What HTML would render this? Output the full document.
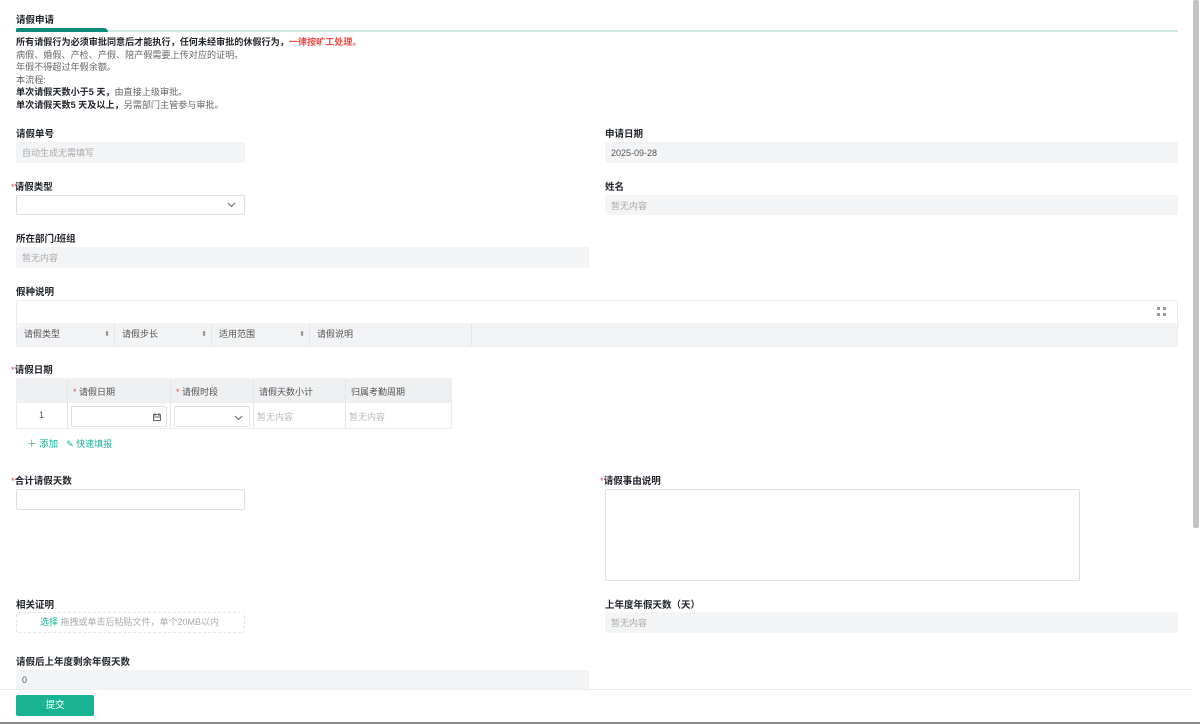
<!DOCTYPE html>
<html><head><meta charset="utf-8"><style>
*{margin:0;padding:0;box-sizing:border-box}
body{width:1200px;height:724px;overflow:hidden;background:#fff;font-family:"Liberation Sans","Noto Sans CJK SC",sans-serif;font-size:9.5px;color:#333;position:relative}
.a{position:absolute;white-space:nowrap}
.lb{font-weight:bold;color:#1f2329;font-size:9.5px}
.req:before{content:"*";color:#f54a45;font-weight:normal}
.in{position:absolute;background:#f3f4f6;border-radius:2px;color:#aaa;padding-left:6px;display:flex;align-items:center;font-size:9px}
.bx{position:absolute;border:1px solid #dee0e3;border-radius:2px;background:#fff}
.t{font-size:9.1px;line-height:12.6px}
</style></head><body>
<div class="a lb" style="left:16px;top:12px">请假申请</div>
<div class="a" style="left:16px;top:30px;width:1162px;height:2px;background:#cfe8e3"></div>
<div class="a" style="left:16px;top:28px;width:92px;height:4px;background:#0e8a7a;border-radius:2px 4px 0 0"></div>
<div class="a t" style="left:16px;top:36px">
<div><b style="color:#1f2329">所有请假行为必须审批同意后才能执行，任何未经审批的休假行为，</b><b style="color:#f54a45">一律按旷工处理。</b></div>
<div style="color:#666">病假、婚假、产检、产假、陪产假需要上传对应的证明。</div>
<div style="color:#666">年假不得超过年假余额。</div>
<div style="color:#666">本流程:</div>
<div style="color:#666"><b style="color:#1f2329">单次请假天数小于5 天</b><b style="color:#1f2329">，</b>由直接上级审批。</div>
<div style="color:#666"><b style="color:#1f2329">单次请假天数5 天及以上</b><b style="color:#1f2329">，</b>另需部门主管参与审批。</div>
</div>

<div class="a lb" style="left:16px;top:126px">请假单号</div>
<div class="in" style="left:16px;top:142px;width:229px;height:21px">自动生成无需填写</div>
<div class="a lb" style="left:605px;top:126px">申请日期</div>
<div class="in" style="left:605px;top:142px;width:573px;height:21px;color:#555">2025-09-28</div>

<div class="a lb req" style="left:11px;top:179px">请假类型</div>
<div class="bx" style="left:16px;top:195px;width:229px;height:20px"><svg style="position:absolute;right:8px;top:6px" width="9" height="6"><path d="M1 1l3.5 3.5L8 1" stroke="#666" fill="none"/></svg></div>
<div class="a lb" style="left:605px;top:179px">姓名</div>
<div class="in" style="left:605px;top:195px;width:573px;height:20px">暂无内容</div>

<div class="a lb" style="left:16px;top:231px">所在部门/班组</div>
<div class="in" style="left:16px;top:247px;width:573px;height:21px">暂无内容</div>

<div class="a lb" style="left:16px;top:284px">假种说明</div>
<div class="bx" style="left:16px;top:300px;width:1162px;height:47px;border-color:#ebedf0">
<svg style="position:absolute;right:11px;top:6px" width="9" height="9" fill="#999"><rect x="0" y="0" width="3" height="3"/><rect x="6" y="0" width="3" height="3"/><rect x="0" y="6" width="3" height="3"/><rect x="6" y="6" width="3" height="3"/></svg>
<div style="position:absolute;left:0;top:22px;right:0;height:23px;background:#f2f3f5;display:flex;color:#555;font-size:9px;align-items:center">
<div style="width:98px;border-right:1px solid #e5e6e8;height:23px;line-height:23px;padding-left:7px;position:relative">请假类型<span style="position:absolute;right:4px;font-size:7px;color:#888">⬍</span></div>
<div style="width:97px;border-right:1px solid #e5e6e8;height:23px;line-height:23px;padding-left:7px;position:relative">请假步长<span style="position:absolute;right:4px;font-size:7px;color:#888">⬍</span></div>
<div style="width:98px;border-right:1px solid #e5e6e8;height:23px;line-height:23px;padding-left:7px;position:relative">适用范围<span style="position:absolute;right:4px;font-size:7px;color:#888">⬍</span></div>
<div style="width:162px;border-right:1px solid #e5e6e8;height:23px;line-height:23px;padding-left:7px">请假说明</div>
</div></div>

<div class="a lb req" style="left:11px;top:362px">请假日期</div>
<div class="bx" style="left:16px;top:378px;width:436px;height:51px;border-color:#ebedf0;overflow:hidden;font-size:9px;color:#555">
<div style="position:absolute;left:0;top:0;width:436px;height:24px;background:#eff0f2"></div>
<div style="position:absolute;left:50px;top:0;width:1px;height:51px;background:#e5e6e8"></div>
<div style="position:absolute;left:153px;top:0;width:1px;height:51px;background:#e5e6e8"></div>
<div style="position:absolute;left:236px;top:0;width:1px;height:51px;background:#e5e6e8"></div>
<div style="position:absolute;left:328px;top:0;width:1px;height:51px;background:#e5e6e8"></div>
<div class="a" style="left:56px;top:6px"><span style="color:#f54a45">*</span> 请假日期</div>
<div class="a" style="left:159px;top:6px"><span style="color:#f54a45">*</span> 请假时段</div>
<div class="a" style="left:242px;top:6px">请假天数小计</div>
<div class="a" style="left:334px;top:6px">归属考勤周期</div>
<div class="a" style="left:22px;top:31px">1</div>
<div class="bx" style="left:54px;top:27px;width:96px;height:21px"><svg style="position:absolute;right:5px;top:6px" width="8" height="8"><rect x=".5" y="1.5" width="7" height="6" stroke="#666" fill="none"/><path d="M2 0v3M6 0v3M.5 4h7" stroke="#666"/></svg></div>
<div class="bx" style="left:157px;top:27px;width:76px;height:21px"><svg style="position:absolute;right:6px;top:8px" width="9" height="6"><path d="M1 1l3.5 3.5L8 1" stroke="#666" fill="none"/></svg></div>
<div class="a" style="left:240px;top:31px;color:#bbb">暂无内容</div>
<div class="a" style="left:332px;top:31px;color:#bbb">暂无内容</div>
</div>
<div class="a" style="left:27px;top:436px;color:#19b393;font-size:9.5px">＋ 添加 &nbsp;&nbsp;<span style="font-size:9px">✎ 快速填报</span></div>

<div class="a lb req" style="left:11px;top:473px">合计请假天数</div>
<div class="bx" style="left:16px;top:489px;width:229px;height:21px"></div>
<div class="a lb req" style="left:600px;top:473px">请假事由说明</div>
<div class="bx" style="left:605px;top:489px;width:475px;height:92px"></div>

<div class="a lb" style="left:16px;top:597px">相关证明</div>
<div class="bx" style="left:16px;top:612px;width:229px;height:21px;border-style:dashed;border-color:#e5e6e8;font-size:9px;color:#aaa;line-height:19px;padding-left:23px"><span style="color:#19b393">选择</span> 拖拽或单击后粘贴文件，单个20MB以内</div>
<div class="a lb" style="left:605px;top:597px">上年度年假天数（天）</div>
<div class="in" style="left:605px;top:612px;width:573px;height:21px">暂无内容</div>

<div class="a lb" style="left:16px;top:654px">请假后上年度剩余年假天数</div>
<div class="in" style="left:16px;top:670px;width:573px;height:20px;color:#555">0</div>

<div class="a" style="left:0;top:689px;width:1192px;height:35px;background:#fff;border-top:1px solid #eee"></div>
<div class="a" style="left:16px;top:695px;width:78px;height:21px;background:#19b393;border-radius:2px;color:#fff;text-align:center;line-height:21px;font-size:9.5px">提交</div>
<div class="a" style="left:0;top:722px;width:1200px;height:2px;background:#888"></div>
<div class="a" style="left:1193px;top:0;width:6px;height:528px;background:#c2c4c7;border-radius:2px"></div>
</body></html>
